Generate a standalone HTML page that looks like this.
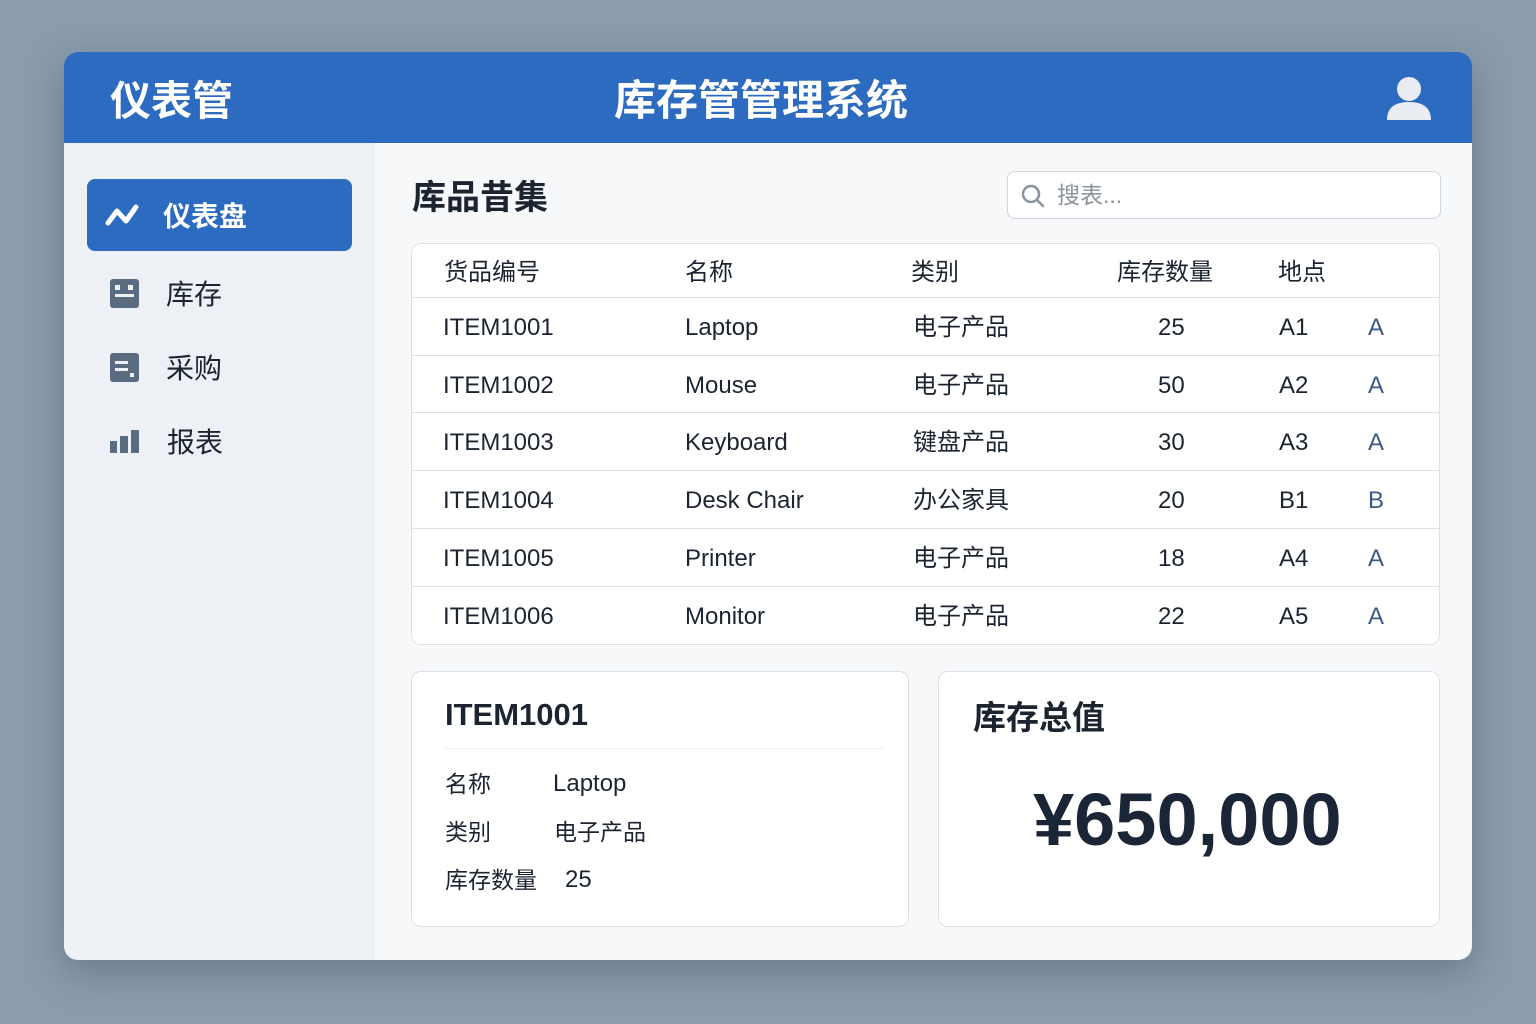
<!DOCTYPE html>
<html><head><meta charset="utf-8"><style>
*{margin:0;padding:0;box-sizing:border-box}
body{width:1536px;height:1024px;background:#8b9cad;font-family:"Liberation Sans","Noto Sans CJK SC",sans-serif;position:relative;overflow:hidden;color:#1c2430}
.a{position:absolute}
.win{left:64px;top:52px;width:1408px;height:908px;border-radius:14px;background:#f7f8f9;overflow:hidden;box-shadow:0 12px 40px rgba(40,55,75,.35)}
.hdr{left:0;top:0;width:1408px;height:91px;background:#2c6bbf;color:#fff}
.side{left:0;top:91px;width:311px;height:817px;background:#edf1f5}
.nav{left:23px;width:265px;height:72px;font-size:28px;display:flex;align-items:center}
.tbl{left:347px;top:191px;width:1029px;height:402px;background:#fff;border:1px solid #dde1e6;border-radius:10px;overflow:hidden}
.row{position:absolute;left:0;width:100%;height:58px;border-top:1px solid #dfe2e6;font-size:24px;color:#1c2430}
.row span{position:absolute;top:2px;line-height:56px}
.card{background:#fff;border:1px solid #dde1e6;border-radius:10px}
.l{line-height:30px}
</style></head><body>
<div class="a win">
 <div class="a hdr">
  <div class="a" style="left:46px;top:23px;font-size:41px;font-weight:bold;line-height:52px">仪表管</div>
  <div class="a" style="left:550px;top:23px;font-size:42px;font-weight:bold;line-height:52px">库存管管理系统</div>
  <svg class="a" style="left:1320px;top:22px" width="50" height="48" viewBox="0 0 50 48"><circle cx="25" cy="15" r="12" fill="#e9edf2"/><path d="M3 46 Q3 28 25 28 Q47 28 47 46 Z" fill="#e9edf2"/></svg>
 </div>
 <div class="a side">
  <div class="a nav" style="top:36px;background:#2c6bbf;border-radius:8px;color:#fff;font-weight:bold">
   <svg style="margin-left:18px" width="36" height="24" viewBox="0 0 36 24"><path d="M3 20 L12 8 L21 18 L31 4" stroke="#fff" stroke-width="5" fill="none" stroke-linejoin="round" stroke-linecap="round"/></svg>
   <span style="margin-left:22px">仪表盘</span></div>
  <div class="a nav" style="top:114px">
   <svg style="margin-left:23px" width="29" height="29"><rect width="29" height="29" rx="3" fill="#5b6b80"/><rect x="5" y="6" width="5" height="5" fill="#edf1f5"/><rect x="18" y="6" width="5" height="5" fill="#edf1f5"/><rect x="5" y="15" width="19" height="3" fill="#edf1f5"/></svg>
   <span style="margin-left:27px">库存</span></div>
  <div class="a nav" style="top:188px">
   <svg style="margin-left:23px" width="29" height="29"><rect width="29" height="29" rx="3" fill="#5b6b80"/><rect x="5" y="8" width="13" height="3" fill="#edf1f5"/><rect x="5" y="15" width="13" height="3" fill="#edf1f5"/><rect x="20" y="20" width="4" height="4" fill="#edf1f5"/></svg>
   <span style="margin-left:27px">采购</span></div>
  <div class="a nav" style="top:262px">
   <svg style="margin-left:23px" width="30" height="24"><rect x="0" y="12" width="7" height="12" fill="#5b6b80"/><rect x="10" y="7" width="8" height="17" fill="#5b6b80"/><rect x="21" y="1" width="8" height="23" fill="#5b6b80"/></svg>
   <span style="margin-left:27px">报表</span></div>
 </div>
 <div class="a" style="left:348px;top:124px;font-size:34px;font-weight:bold;line-height:44px">库品昔集</div>
 <div class="a" style="left:943px;top:119px;width:434px;height:48px;background:#fff;border:1px solid #d3d8de;border-radius:8px">
  <svg class="a" style="left:12px;top:11px" width="26" height="26"><circle cx="11" cy="11" r="8" stroke="#8a929c" stroke-width="2.5" fill="none"/><path d="M17 17 L23 23" stroke="#8a929c" stroke-width="2.5" stroke-linecap="round"/></svg>
  <span class="a" style="left:49px;top:0;line-height:46px;font-size:23px;color:#8a929c">搜表...</span></div>
 <div class="a tbl">
  <div class="row" style="top:0;border-top:none;height:54px"><span style="left:32px;line-height:54px">货品编号</span><span style="left:273px;line-height:54px">名称</span><span style="left:499px;line-height:54px">类别</span><span style="left:705px;line-height:54px">库存数量</span><span style="left:866px;line-height:54px">地点</span></div>
  <div class="row" style="top:53px"><span style="left:31px">ITEM1001</span><span style="left:273px">Laptop</span><span style="left:501px">电子产品</span><span style="left:746px">25</span><span style="left:867px">A1</span><span style="left:956px;color:#3c5a86">A</span></div>
  <div class="row" style="top:111px"><span style="left:31px">ITEM1002</span><span style="left:273px">Mouse</span><span style="left:501px">电子产品</span><span style="left:746px">50</span><span style="left:867px">A2</span><span style="left:956px;color:#3c5a86">A</span></div>
  <div class="row" style="top:168px"><span style="left:31px">ITEM1003</span><span style="left:273px">Keyboard</span><span style="left:501px">键盘产品</span><span style="left:746px">30</span><span style="left:867px">A3</span><span style="left:956px;color:#3c5a86">A</span></div>
  <div class="row" style="top:226px"><span style="left:31px">ITEM1004</span><span style="left:273px">Desk Chair</span><span style="left:501px">办公家具</span><span style="left:746px">20</span><span style="left:867px">B1</span><span style="left:956px;color:#3c5a86">B</span></div>
  <div class="row" style="top:284px"><span style="left:31px">ITEM1005</span><span style="left:273px">Printer</span><span style="left:501px">电子产品</span><span style="left:746px">18</span><span style="left:867px">A4</span><span style="left:956px;color:#3c5a86">A</span></div>
  <div class="row" style="top:342px"><span style="left:31px">ITEM1006</span><span style="left:273px">Monitor</span><span style="left:501px">电子产品</span><span style="left:746px">22</span><span style="left:867px">A5</span><span style="left:956px;color:#3c5a86">A</span></div>
 </div>
 <div class="a card" style="left:347px;top:619px;width:498px;height:256px">
  <div class="a l" style="left:33px;top:25px;font-size:31px;font-weight:bold;line-height:36px">ITEM1001</div>
  <div class="a" style="left:32px;top:76px;width:440px;height:1px;background:#eceef0"></div>
  <div class="a l" style="left:33px;top:97px;font-size:23px">名称</div><div class="a l" style="left:141px;top:97px;font-size:24px">Laptop</div>
  <div class="a l" style="left:33px;top:145px;font-size:23px">类别</div><div class="a l" style="left:142px;top:145px;font-size:23px">电子产品</div>
  <div class="a l" style="left:33px;top:193px;font-size:23px">库存数量</div><div class="a l" style="left:153px;top:193px;font-size:24px">25</div>
 </div>
 <div class="a card" style="left:874px;top:619px;width:502px;height:256px">
  <div class="a" style="left:34px;top:24px;font-size:33px;font-weight:bold;line-height:44px">库存总值</div>
  <div class="a" style="left:94px;top:106px;font-size:74px;font-weight:bold;color:#1a2535;line-height:84px">¥650,000</div>
 </div>
</div>
</body></html>
